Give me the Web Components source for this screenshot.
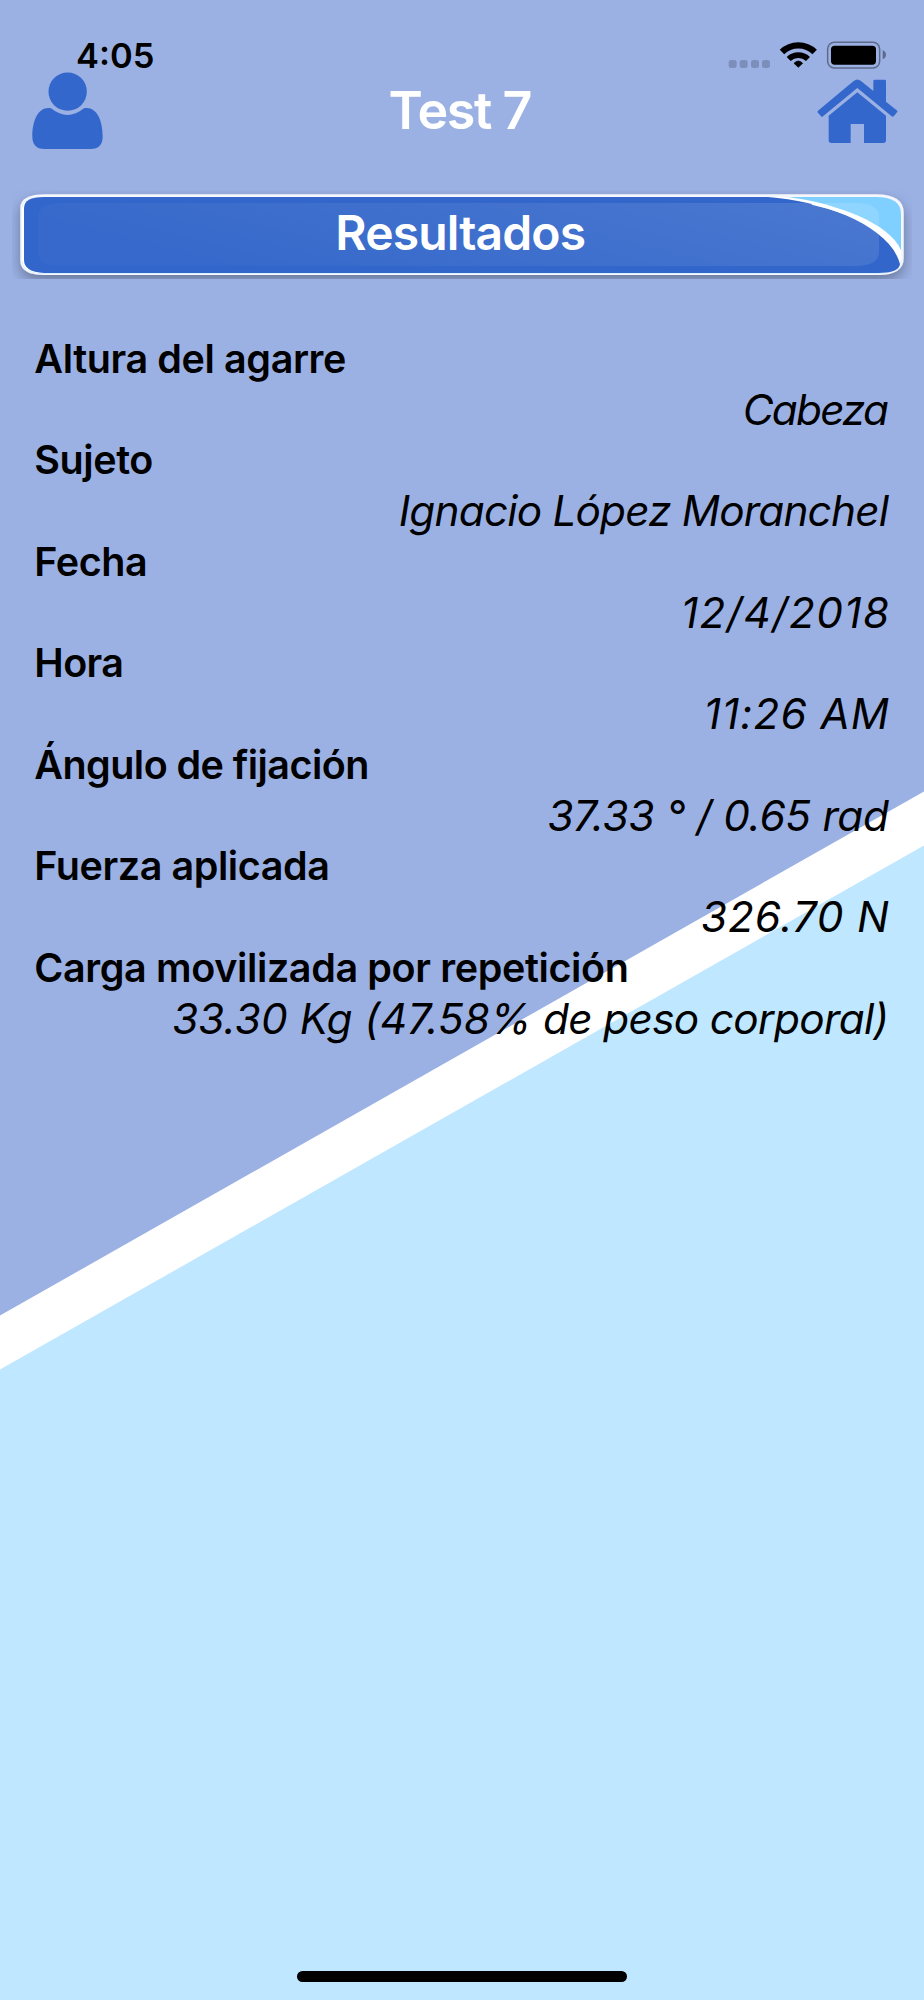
<!DOCTYPE html>
<html lang="es">
<head>
<meta charset="utf-8">
<title>Test 7</title>
<style>
  html, body { margin: 0; padding: 0; }
  body { font-family: Inter, "Liberation Sans", sans-serif; color: #000; }
</style>
</head>
<body>
<app-screen>
  <status-bar slot="top" time="4:05"></status-bar>
  <nav-header slot="top">Test 7</nav-header>
  <banner-title slot="top">Resultados</banner-title>
  <result-list>
    <result-row label="Altura del agarre" style="--label-track:-.39px;--value-track:-1.78px">Cabeza</result-row>
    <result-row label="Sujeto" style="--label-track:-.43px;--value-track:-.8px">Ignacio López Moranchel</result-row>
    <result-row label="Fecha" style="--label-track:-.45px;--value-track:1.43px">12/4/2018</result-row>
    <result-row label="Hora" style="--label-track:-.61px;--value-track:1.05px">11:26 AM</result-row>
    <result-row label="Ángulo de fijación" style="--label-track:-.56px;--value-track:-.25px">37.33 ° / 0.65 rad</result-row>
    <result-row label="Fuerza aplicada" style="--label-track:-.42px;--value-track:.85px">326.70 N</result-row>
    <result-row label="Carga movilizada por repetición" style="--label-track:-.37px;--value-track:-.64px"><span style="letter-spacing:.1px">33.30 Kg (47.58%</span> de peso corporal)</result-row>
  </result-list>
</app-screen>
<script>
(function () {
  function define(name, html, setup) {
    customElements.define(name, class extends HTMLElement {
      constructor() {
        super();
        this.attachShadow({ mode: 'open' }).innerHTML = html;
      }
      connectedCallback() {
        if (setup) setup(this, this.shadowRoot);
      }
    });
  }

  // Full-height screen: diagonal backdrop with the content stacked on it
  define('app-screen', `
    <style>
      :host { display: grid; width: 924px; height: 2000px; overflow: hidden; }
      .back, .content { grid-area: 1 / 1; }
      .back { display: block; width: 100%; height: 100%; }
      .content { display: flex; flex-direction: column; min-width: 0; }
      .home { width: 330px; height: 11px; margin: auto auto 18px; border-radius: 6px; background: #000; }
    </style>
    <svg class="back" viewBox="0 0 924 2000">
      <rect width="924" height="2000" fill="#bfe7ff"/>
      <path d="M0 0H924V845.5L0 1369.5Z" fill="#fff"/>
      <path d="M0 0H924V791.5L0 1315.5Z" fill="#9bb1e4"/>
    </svg>
    <div class="content">
      <slot name="top"></slot>
      <slot></slot>
      <div class="home"></div>
    </div>
  `);

  define('status-bar', `
    <style>
      :host { display: flex; justify-content: space-between; align-items: flex-start; height: 72px; padding: 0 37px 0 76px; box-sizing: border-box; }
      .time { margin-top: 35px; font-size: 34.5px; line-height: 42px; font-weight: 600; }
      svg { display: block; width: 158.67px; height: 28px; margin-top: 41.33px; }
    </style>
    <span class="time"></span>
    <svg viewBox="84 64 476 84">
      <g fill="#7b8fba">
        <rect x="86" y="121" width="24" height="24" rx="7"/>
        <rect x="119" y="121" width="24" height="24" rx="7"/>
        <rect x="153" y="121" width="24" height="24" rx="7"/>
        <rect x="186" y="121" width="24" height="24" rx="7"/>
      </g>
      <g fill="none" stroke="#000" stroke-width="19">
        <path d="M246 97A70 70 0 0 1 344 97"/>
        <path d="M266 118A42 42 0 0 1 324 118" stroke-width="17"/>
      </g>
      <path d="M282 131Q295 117 308 131L295 143Z" stroke="#000" stroke-width="2" stroke-linejoin="round"/>
      <rect x="383" y="68" width="156" height="77" rx="20" fill="none" stroke="#5d6a89" stroke-width="4.5"/>
      <rect x="393" y="78" width="135" height="57" rx="11"/>
      <path d="M548 92Q558 96 558 105T548 119Z" fill="#5d6a89"/>
    </svg>
  `, function (host, root) {
    root.querySelector('.time').textContent = host.getAttribute('time');
  });

  define('nav-header', `
    <style>
      :host { display: grid; grid-template-columns: 1fr auto 1fr; align-items: start; height: 118px; padding: 0 26.3px 0 32px; box-sizing: border-box; }
      svg { display: block; fill: #3467cb; }
      .user { width: 71px; height: 77.33px; }
      .house { width: 81px; height: 64.33px; margin-top: 6.67px; justify-self: end; }
      h1 { margin: 8px 10px 0 0; font-size: 52px; line-height: 62px; font-weight: 600; letter-spacing: -1.4px; color: #fff; white-space: nowrap; }
    </style>
    <svg class="user" viewBox="96 156 213 232">
      <circle cx="203" cy="215" r="57.5"/>
      <path d="M153 265Q203 305 252 265C288 258 308 298 308 350C308 373 296 387 272 387H133C109 387 97 373 97 350C97 298 117 258 153 265Z"/>
    </svg>
    <h1><slot></slot></h1>
    <svg class="house" viewBox="350 176 243 193">
      <path d="M353 271L460 182Q471 173 482 182L519 212V182Q519 178 523 178H553Q557 178 557 182V244L589 270Q593 273 590 276L581 287Q578 291 574 288L471 203L368 288Q365 291 362 288L353 277Q350 274 353 271Z"/>
      <path d="M471 216L557 286V360Q557 368 549 368H491V311H451V368H393Q385 368 385 360V286Z"/>
    </svg>
  `);

  define('banner-title', `
    <style>
      :host { display: grid; height: 89px; padding: 0 12px; }
      svg, h2 { grid-area: 1 / 1; }
      svg { display: block; width: 900px; height: 89px; overflow: hidden; }
      h2 { margin: 15px 3.4px 0 0; font-size: 48px; line-height: 56px; font-weight: 600; letter-spacing: -.85px; color: #fff; text-align: center; z-index: 1; }
    </style>
    <svg viewBox="12 190 900 89">
      <defs>
        <linearGradient id="shine" x1="0" x2="1" y1="0.3" y2="0">
          <stop offset="0" stop-color="#fff" stop-opacity="0.02"/>
          <stop offset="1" stop-color="#fff" stop-opacity="0.12"/>
        </linearGradient>
        <filter id="shadow" x="-5%" y="-40%" width="110%" height="180%">
          <feDropShadow dx="0" dy="6" stdDeviation="7" flood-color="#000" flood-opacity="0.32"/>
        </filter>
        <clipPath id="plate">
          <path d="M46 197H876Q901 197 901 214V258Q901 273.5 880 273.5H44Q22 273.5 22 260V208Q22 197 46 197Z"/>
        </clipPath>
      </defs>
      <path filter="url(#shadow)" fill="#f4f6fc" d="M46 194.3H876Q903.7 194.3 903.7 213V258Q903.7 275 878 275H44Q20.3 275 20.3 260V208Q20.3 194.3 46 194.3Z"/>
      <g clip-path="url(#plate)">
        <rect x="12" y="190" width="900" height="89" fill="#80d0ff"/>
        <path fill="#fff" d="M12 195H768C824 198.5 892 221 902 253V279H12Z"/>
      </g>
      <path fill="#3266ca" d="M44 197H768C824 201 890 226 900 264Q899 273 878 273H44Q24 272 24 260V208Q24 197 44 197Z"/>
      <path fill="url(#shine)" d="M60 203H855Q879 203 879 217V252Q879 266 855 266H60Q38 266 38 252V217Q38 203 60 203Z"/>
      <path fill="none" stroke="#fff" stroke-width="2.5" d="M812 203.5C850 212 891 229 900.5 258"/>
    </svg>
    <h2><slot></slot></h2>
  `);

  define('result-list', `
    <style>
      :host { display: flex; flex-direction: column; padding: 54.5px 35px 0 34.3px; }
    </style>
    <slot></slot>
  `);

  // Label on the left, value on the line below, aligned right
  define('result-row', `
    <style>
      :host { display: flex; flex-direction: column; height: 101.6px; white-space: nowrap; }
      .label { font-size: 39.5px; line-height: 50px; font-weight: 600; letter-spacing: var(--label-track, 0); }
      .value { align-self: flex-end; margin-right: calc(-1 * var(--value-track, 0px)); font-size: 42.3px; line-height: 51px; font-style: italic; letter-spacing: var(--value-track, 0); }
    </style>
    <span class="label"></span>
    <span class="value"><slot></slot></span>
  `, function (host, root) {
    root.querySelector('.label').textContent = host.getAttribute('label');
  });
})();
</script>
</body>
</html>
